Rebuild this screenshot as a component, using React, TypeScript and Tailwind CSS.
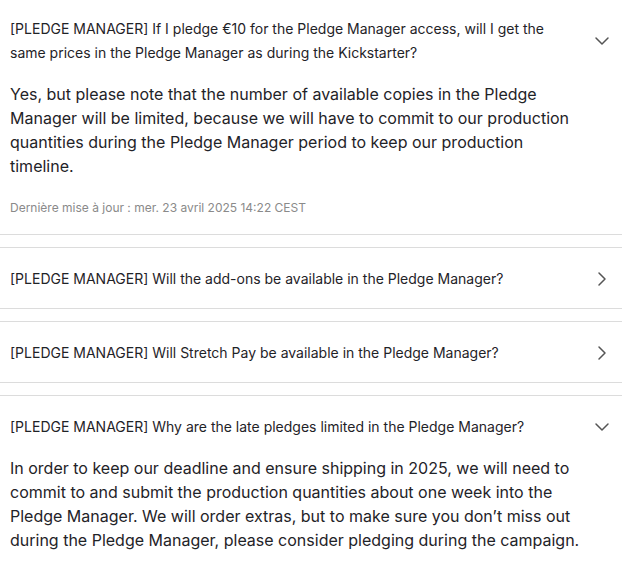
import { ChevronDown, ChevronRight } from "lucide-react";

type Faq = {
  question: string;
  answer?: string[];
  meta?: string;
  open: boolean;
};

const faqs: Faq[] = [
  {
    question:
      "[PLEDGE MANAGER] If I pledge €10 for the Pledge Manager access, will I get the same prices in the Pledge Manager as during the Kickstarter?",
    answer: [
      "Yes, but please note that the number of available copies in the Pledge Manager will be limited, because we will have to commit to our production quantities during the Pledge Manager period to keep our production timeline.",
    ],
    meta: "Dernière mise à jour : mer. 23 avril 2025 14:22 CEST",
    open: true,
  },
  {
    question: "[PLEDGE MANAGER] Will the add-ons be available in the Pledge Manager?",
    open: false,
  },
  {
    question: "[PLEDGE MANAGER] Will Stretch Pay be available in the Pledge Manager?",
    open: false,
  },
  {
    question: "[PLEDGE MANAGER] Why are the late pledges limited in the Pledge Manager?",
    answer: [
      "In order to keep our deadline and ensure shipping in 2025, we will need to commit to and submit the production quantities about one week into the Pledge Manager. We will order extras, but to make sure you don’t miss out during the Pledge Manager, please consider pledging during the campaign.",
    ],
    open: true,
  },
];

function FaqItem({ faq }: { faq: Faq }) {
  return (
    <div className="border-y border-[#dcdcdc] bg-white">
      <button className="flex w-full items-center pb-[17px] pl-[10px] pr-2 pt-[19px] text-left">
        <span className="flex-1 pr-[32px] text-[14px] leading-6 text-[#1f2328]">
          {faq.question}
        </span>
        {faq.open ? (
          <ChevronDown size={24} strokeWidth={1.5} className="shrink-0 text-[#555]" />
        ) : (
          <ChevronRight size={24} strokeWidth={1.5} className="shrink-0 text-[#555]" />
        )}
      </button>
      {faq.open && faq.answer && (
        <div className="px-[10px] pr-[40px]">
          {faq.answer.map((p, i) => (
            <p key={i} className="text-[16px] leading-6 text-[#1f2328]">
              {p}
            </p>
          ))}
          {faq.meta ? (
            <p className="pb-[17px] pt-[21px] text-[12px] leading-[18px] text-[#8a8a8a]">
              {faq.meta}
            </p>
          ) : (
            <div className="h-[56px]" />
          )}
        </div>
      )}
    </div>
  );
}

export default function App() {
  return (
    <div
      className="h-screen overflow-hidden bg-white"
      style={{ fontFamily: "Inter, 'Noto Sans', sans-serif" }}
    >
      <div className="-mt-[3px] flex flex-col gap-3">
        {faqs.map((faq, i) => (
          <FaqItem key={i} faq={faq} />
        ))}
      </div>
    </div>
  );
}
